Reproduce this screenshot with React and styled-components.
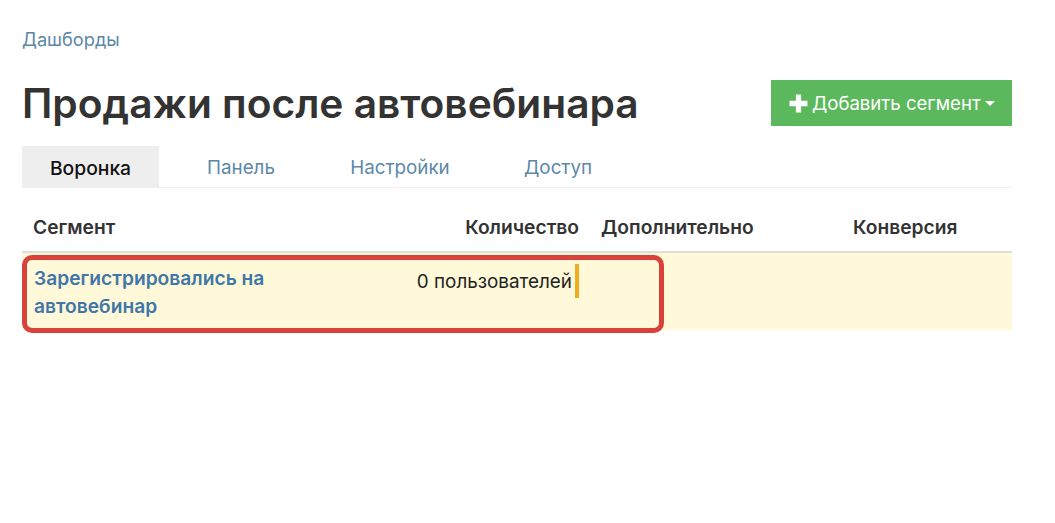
import React from "react";
import styled, { createGlobalStyle } from "styled-components";

const GlobalStyle = createGlobalStyle`
  html, body { margin: 0; padding: 0; background: #fff; }
  body { font-family: Inter, "Noto Sans", sans-serif; color: #333; }
`;

const Page = styled.div`
  width: 990px;
  min-height: 523px;
  box-sizing: border-box;
  margin-left: 22px;
  padding-top: 28px;
`;

const Crumb = styled.a`
  display: block;
  font-size: 18.2px;
  line-height: 22px;
  color: #5c88a8;
`;

const Header = styled.div`
  display: flex;
  justify-content: space-between;
  align-items: flex-start;
  margin-top: 30px;
  height: 66px;
`;

const Title = styled.h1`
  margin: 0;
  font-size: 40.7px;
  line-height: 48px;
  font-weight: 600;
  color: #333;
`;

const AddButton = styled.button`
  display: flex;
  align-items: center;
  gap: 4px;
  width: 241px;
  height: 46px;
  padding: 0 0 0 18px;
  border: 0;
  background: #5cb85c;
  color: #fff;
  font: 400 18.6px Inter, sans-serif;
  white-space: nowrap;
`;

const Caret = styled.span`
  width: 0;
  height: 0;
  border-left: 5px solid transparent;
  border-right: 5px solid transparent;
  border-top: 5px solid #fff;
`;

const Tabs = styled.div`
  display: flex;
  height: 41px;
  border-bottom: 1px solid #eee;
`;

const Tab = styled.a`
  display: flex;
  align-items: center;
  justify-content: center;
  width: ${(p) => p.$width}px;
  font-size: ${(p) => (p.$active ? 19.3 : 18.8)}px;
  padding-top: 2px;
  box-sizing: border-box;
  color: ${(p) => (p.$active ? "#111" : "#5c88a8")};
  font-weight: ${(p) => (p.$active ? 500 : 400)};
  background: ${(p) => (p.$active ? "#eee" : "transparent")};
`;

const Row = styled.div`
  display: grid;
  grid-template-columns: 290px 267px 252px 1fr;
`;

const HeadRow = styled(Row)`
  height: 65px;
  border-bottom: 2px solid #ddd;
  align-items: center;
  padding-top: 15px;
  box-sizing: border-box;
`;

const HeadCell = styled.div`
  font-size: 19.2px;
  font-weight: 600;
  color: #333;
  padding-left: ${(p) => (p.$indent ?? 11)}px;
  text-align: ${(p) => (p.$right ? "right" : "left")};
`;

const BodyRow = styled(Row)`
  position: relative;
  height: 77px;
  background: #fff8d9;
`;

const SegmentLink = styled.a`
  padding: 11px 0 0 12px;
  font-size: 19.2px;
  line-height: 28px;
  font-weight: 600;
  color: #3f77a8;
`;

const CountCell = styled.div`
  display: flex;
  justify-content: flex-end;
  align-items: flex-start;
  padding-top: 11px;
  font-size: 18.85px;
  line-height: 36px;
  color: #222;
`;

const Bar = styled.span`
  flex: none;
  width: 4px;
  height: 34px;
  margin-left: 3px;
  background: #f0ad1e;
`;

const Highlight = styled.div`
  position: absolute;
  left: 0;
  top: 2px;
  width: 642px;
  height: 78px;
  box-sizing: border-box;
  border: 5px solid #d9423a;
  border-radius: 10px;
`;

const PlusIcon = () => (
  <svg width="19" height="19" viewBox="0 0 18 18" aria-hidden="true">
    <path d="M6.5 0.5h5v6h6v5h-6v6h-5v-6h-6v-5h6z" fill="#fff" />
  </svg>
);

export default function App() {
  return (
    <>
      <GlobalStyle />
      <Page>
        <Crumb>Дашборды</Crumb>
        <Header>
          <Title>Продажи после автовебинара</Title>
          <AddButton>
            <PlusIcon />
            Добавить сегмент
            <Caret />
          </AddButton>
        </Header>
        <Tabs>
          <Tab $active $width={137}>Воронка</Tab>
          <Tab $width={164}>Панель</Tab>
          <Tab $width={154}>Настройки</Tab>
          <Tab $width={162}>Доступ</Tab>
        </Tabs>
        <HeadRow>
          <HeadCell>Сегмент</HeadCell>
          <HeadCell $right $indent={0}>Количество</HeadCell>
          <HeadCell $indent={22}>Дополнительно</HeadCell>
          <HeadCell $indent={22}>Конверсия</HeadCell>
        </HeadRow>
        <BodyRow>
          <SegmentLink>Зарегистрировались на автовебинар</SegmentLink>
          <CountCell>
            0 пользователей
            <Bar />
          </CountCell>
          <div />
          <div />
          <Highlight />
        </BodyRow>
      </Page>
    </>
  );
}
